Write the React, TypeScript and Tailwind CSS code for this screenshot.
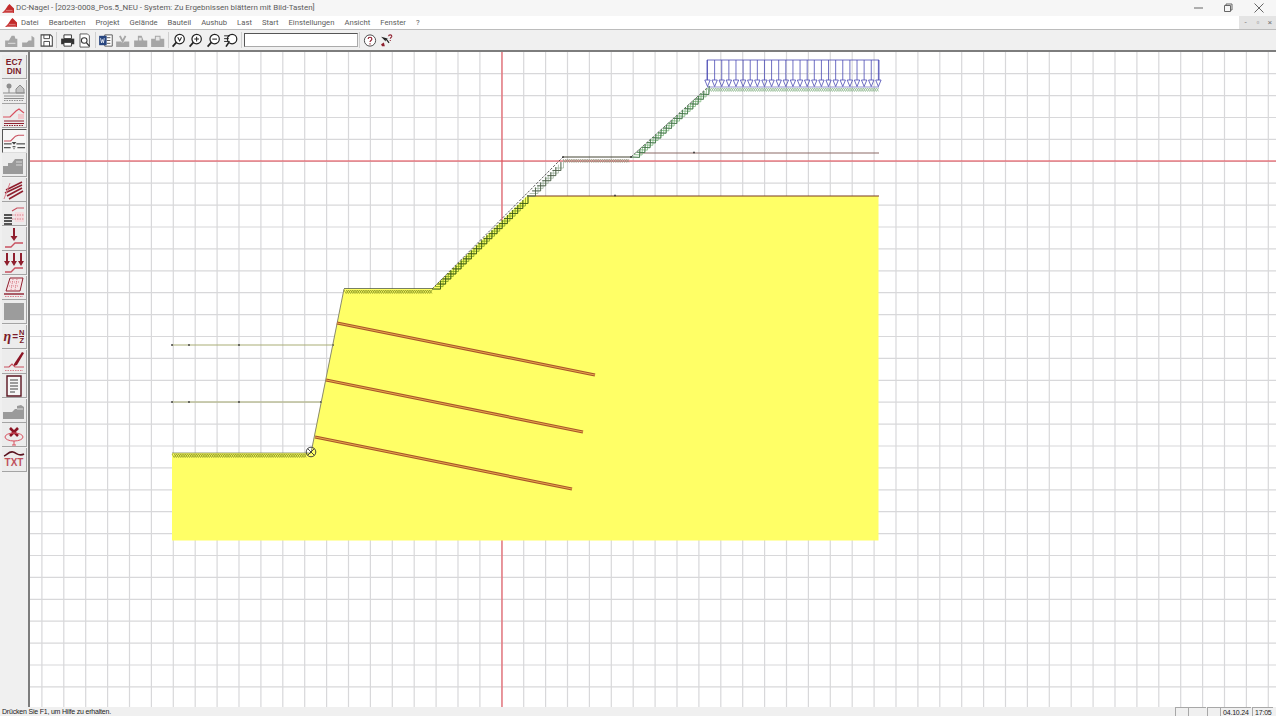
import type { ReactNode } from 'react';

type Pt = [number, number];

const UI_FONT = "font-['Roboto','Noto_Sans',sans-serif]";

// chevrons below a sloped ground segment; arms run back up to the surface
const chevrons = (a: Pt, b: Pt, depth: number, step: number, inset = 0) => {
  const dx = b[0] - a[0];
  const dy = b[1] - a[1];
  const len = Math.hypot(dx, dy);
  const ux = dx / len;
  const uy = dy / len;
  const nx = -uy;
  const ny = ux;
  const out: string[] = [];
  const d = depth - inset;
  for (let t = depth; t <= len - depth / 2; t += step) {
    const p = (along: number, off: number) =>
      `${(a[0] + ux * along + Math.abs(nx) * off).toFixed(1)},${(a[1] + uy * along + Math.abs(ny) * off).toFixed(1)}`;
    out.push(`M${p(t - d, inset)}L${p(t, depth)}L${p(t + d, inset)}`);
  }
  return out.join('');
};

const zigzag = (x1: number, x2: number, y: number, h: number, step: number, shift = 0) => {
  const pts: string[] = [];
  let i = 0;
  for (let x = x1 + shift; x <= x2; x += step / 2) {
    pts.push(`${x.toFixed(1)},${(i % 2 === 0 ? y : y + h).toFixed(1)}`);
    i++;
  }
  return pts.join(' ');
};

const range = (n: number) => Array.from({ length: n }, (_, i) => i);

const Dot = ({ x, y }: { x: number; y: number }) => <rect x={x - 0.8} y={y - 0.8} width={1.6} height={1.6} fill="#333" />;

const SlopeHatch = ({ a, b, color, dark }: { a: Pt; b: Pt; color: string; dark: string }) => (
  <g fill="none">
    <path d={chevrons(a, b, 6, 3.6)} stroke={color} strokeWidth={0.75} />
    <path d={chevrons(a, b, 6, 7.2)} stroke={dark} strokeWidth={0.75} />
  </g>
);

const FlatHatch = ({ x1, x2, y, color }: { x1: number; x2: number; y: number; color: string }) => (
  <g fill="none" stroke={color} strokeWidth={0.6}>
    <polyline points={zigzag(x1, x2, y + 1, 3.5, 4.4)} />
    <polyline points={zigzag(x1, x2, y + 1, 3.5, 4.4, 2.2)} />
  </g>
);

const Nail = ({ a, b }: { a: Pt; b: Pt }) => (
  <g>
    <line x1={a[0]} y1={a[1]} x2={b[0]} y2={b[1]} stroke="#a8552a" strokeWidth={3.2} />
    <line x1={a[0]} y1={a[1]} x2={b[0]} y2={b[1]} stroke="#e8a84a" strokeWidth={1} />
  </g>
);

const Drawing = () => {
  const gridX = range(57).map((i) => 41.9 + i * 21.9);
  const gridY = range(30).map((i) => 73.7 + i * 21.9);
  return (
    <svg className="block flex-1 h-full bg-white" viewBox="30 52 1246 655" preserveAspectRatio="none">
      {gridX.map((x) => (
        <line key={x} x1={x} y1={52} x2={x} y2={707} stroke="#d8d8da" strokeWidth={1.2} />
      ))}
      {gridY.map((y) => (
        <line key={y} x1={30} y1={y} x2={1276} y2={y} stroke="#d8d8da" strokeWidth={1.2} />
      ))}
      <line x1={502} y1={52} x2={502} y2={707} stroke="#e8454f" strokeWidth={1} />
      <line x1={30} y1={161} x2={1276} y2={161} stroke="#e8454f" strokeWidth={1} />

      <polygon
        points="172,453 311,453 314,437 344,289 432,289 527,196 878.5,196 878.5,540.5 172,540.5"
        fill="#ffff66"
      />

      <line x1={640} y1={153} x2={879} y2={153} stroke="#8c6a66" strokeWidth={1.2} />
      <Dot x={694} y={152.5} />
      <line x1={527} y1={196} x2={879} y2={196} stroke="#7a3a20" strokeWidth={1.2} />
      <Dot x={615} y={195.5} />

      <line x1={172} y1={345} x2={333} y2={345} stroke="#a9ad76" strokeWidth={1.2} />
      <line x1={172} y1={402} x2={321} y2={402} stroke="#a9ad76" strokeWidth={1.2} />
      {[172, 189, 239, 333].map((x) => (
        <Dot key={x} x={x} y={345} />
      ))}
      {[172, 189, 239, 321].map((x) => (
        <Dot key={x} x={x} y={402} />
      ))}

      <line x1={311} y1={453} x2={344} y2={289} stroke="#8a8a70" strokeWidth={1} />

      <FlatHatch x1={172} x2={308} y={453} color="#6f7f14" />
      <line x1={172} y1={453} x2={311} y2={453} stroke="#66703a" strokeWidth={0.7} />
      <FlatHatch x1={344} x2={432} y={289} color="#6f7f14" />
      <line x1={344} y1={288.5} x2={432} y2={288.5} stroke="#55603a" strokeWidth={0.8} />

      <line x1={432} y1={289} x2={563} y2={157} stroke="#333" strokeWidth={0.8} strokeDasharray="2.5 1.5" />
      <SlopeHatch a={[432, 289]} b={[527, 196]} color="#6f9a18" dark="#37501a" />
      <SlopeHatch a={[527, 196]} b={[563, 160]} color="#9ab09a" dark="#44543f" />

      <line x1={563} y1={157} x2={631} y2={157} stroke="#443" strokeWidth={1} />
      <FlatHatch x1={563} x2={631} y={158} color="#8a8a70" />

      <line x1={631} y1={157} x2={707} y2={88} stroke="#333" strokeWidth={0.8} strokeDasharray="2.5 1.5" />
      <SlopeHatch a={[631, 157]} b={[707, 88]} color="#72b072" dark="#3d6a44" />
      <FlatHatch x1={707} x2={879} y={87} color="#77a877" />
      <Dot x={563} y={157} />
      <Dot x={631} y={157} />

      <Nail a={[337, 323]} b={[595, 375]} />
      <Nail a={[326, 380]} b={[583, 432]} />
      <Nail a={[315, 437]} b={[572, 489]} />

      <g fill="none" stroke="#4a4ab4" strokeWidth={0.8}>
        <polyline points="707,80 707,60 879,60 879,80" />
        {range(25).map((i) => {
          const x = 707.5 + i * 7.12;
          return (
            <g key={x}>
              <line x1={x} y1={60} x2={x} y2={80} />
              <polygon points={`${x - 2.7},80 ${x + 2.7},80 ${x},86.5`} />
            </g>
          );
        })}
      </g>
      <line x1={707} y1={87} x2={879} y2={87} stroke="#4a4ab4" strokeWidth={0.6} />

      <g fill="none" stroke="#333" strokeWidth={0.9}>
        <circle cx={311} cy={452} r={4.8} />
        <line x1={307.6} y1={448.6} x2={314.4} y2={455.4} />
        <line x1={314.4} y1={448.6} x2={307.6} y2={455.4} />
      </g>
    </svg>
  );
};

const RED = '#8f1f2e';
const PINK = '#d9808c';
const GRAY = '#8e8e8e';

const Ico = ({ children }: { children: ReactNode }) => (
  <svg width="24" height="22" viewBox="0 0 24 22" fill="none">
    {children}
  </svg>
);

const Soil = ({ color }: { color: string }) => (
  <g stroke={color}>
    <line x1="2" y1="16" x2="22" y2="16" />
    <line x1="2" y1="18.5" x2="22" y2="18.5" />
    <line x1="2" y1="20.5" x2="22" y2="20.5" strokeDasharray="1.5 1" />
  </g>
);

const sideIcons: { key: string; active?: boolean; node: ReactNode }[] = [
  {
    key: 'din',
    node: (
      <span className="flex flex-col items-center font-['Liberation_Sans',sans-serif] font-bold text-[8.5px] leading-[8.5px] text-[#7b1c2a]">
        <span>EC7</span>
        <span>DIN</span>
      </span>
    ),
  },
  {
    key: 'terrain',
    node: (
      <Ico>
        <circle cx="7" cy="6" r="2.5" fill={GRAY} />
        <line x1="7" y1="8" x2="7" y2="13" stroke={GRAY} />
        <path d="M14 9l4-4 4 4v4h-8z" fill="#c4c4c4" stroke={GRAY} />
        <path d="M1 13h22" stroke={GRAY} />
        <Soil color={GRAY} />
      </Ico>
    ),
  },
  {
    key: 'layers',
    node: (
      <Ico>
        <path d="M1 12h7l6-6 3-2 5 4" stroke="#d8505f" strokeWidth="1.2" />
        <path d="M16 9h6v5h-6z" fill="#f3c8cc" />
        <Soil color={RED} />
      </Ico>
    ),
  },
  {
    key: 'water',
    active: true,
    node: (
      <Ico>
        <path d="M1 11h7l5-5 3-1h6" stroke="#c8505f" strokeWidth="1.2" />
        <path d="M1 14h8M14 14h9" stroke="#222" />
        <path d="M9 12h5l-2.5 3z" fill="#444" />
        <path d="M10 17h3M11 19h1" stroke="#222" />
        <path d="M1 18h7M15 18h8" stroke="#222" />
      </Ico>
    ),
  },
  {
    key: 'gray1',
    node: (
      <Ico>
        <path d="M1 20v-8h5v-3h4l3-4h8v15z" fill="#9a9a9a" />
        <path d="M14 8h6M14 11h6" stroke="#d8d8d8" />
      </Ico>
    ),
  },
  {
    key: 'nails',
    node: (
      <Ico>
        <path d="M4 12l16-8M3 15l17-8M5 18l15-8M7 21l14-8" stroke={RED} strokeWidth="1.6" />
        <path d="M2 21l6-16" stroke={PINK} />
      </Ico>
    ),
  },
  {
    key: 'anchors',
    node: (
      <Ico>
        <path d="M2 12h8M2 15h8M2 18h8M2 21h8" stroke="#222" strokeWidth="1.3" />
        <path d="M10 8l5-3h7" stroke="#c8505f" strokeWidth="1.2" />
        <path d="M13 9h9v10h-9z" fill="#f6dcdf" />
        <path d="M10 12h12M10 16h12" stroke={PINK} strokeDasharray="1.5 1" />
      </Ico>
    ),
  },
  {
    key: 'load1',
    node: (
      <Ico>
        <path d="M12 1v9" stroke={RED} strokeWidth="2" />
        <path d="M8.5 9h7L12 14z" fill={RED} />
        <path d="M3 20h6l4-4h8" stroke="#c8505f" strokeWidth="1.3" />
      </Ico>
    ),
  },
  {
    key: 'load3',
    node: (
      <Ico>
        {[5, 12, 19].map((x) => (
          <g key={x}>
            <path d={`M${x} 1v9`} stroke={RED} strokeWidth="2" />
            <path d={`M${x - 3} 9h6l-3 5z`} fill={RED} />
          </g>
        ))}
        <path d="M3 20h6l4-4h8" stroke="#c8505f" strokeWidth="1.3" />
      </Ico>
    ),
  },
  {
    key: 'slice',
    node: (
      <Ico>
        <path d="M8 2h13l-3 13H4z" fill="#f7e4e6" stroke={RED} />
        <path d="M8 6h10M7 10h10M11 3l-2 11M15 3l-2 11" stroke={PINK} strokeDasharray="1 1" />
        <path d="M2 18h20" stroke={RED} strokeWidth="1.4" />
        <path d="M3 20.5h18" stroke={PINK} strokeDasharray="1.5 1" />
      </Ico>
    ),
  },
  {
    key: 'gray2',
    node: <span className="block w-[20px] h-[17px] bg-[#9c9c9c]" />,
  },
  {
    key: 'eta',
    node: (
      <span className="flex items-center font-['Liberation_Serif',serif] italic font-bold text-[14px] text-[#7b1c2a]">
        η
        <span className="not-italic text-[10px] font-['Liberation_Sans',sans-serif] mx-[1px]">=</span>
        <span className="flex flex-col not-italic items-center text-[7.5px] leading-[7.5px] font-['Liberation_Sans',sans-serif]">
          <span className="border-b border-[#7b1c2a]">N</span>
          <span>Z</span>
        </span>
      </span>
    ),
  },
  {
    key: 'pen',
    node: (
      <Ico>
        <path d="M12 14L20 2l2 1-7 12-3 1z" fill="#8a1424" />
        <path d="M2 17h5l3-3 3 3h9" stroke="#c8505f" strokeWidth="1.2" />
        <path d="M3 20.5h18" stroke={PINK} strokeDasharray="1.5 1" />
      </Ico>
    ),
  },
  {
    key: 'doc',
    node: (
      <Ico>
        <path d="M5 1h14v20H5z" fill="#f6f6f6" stroke="#5a1420" strokeWidth="1.4" />
        <path d="M8 5h8M8 8h8M8 11h8M8 14h8M8 17h5" stroke="#444" />
      </Ico>
    ),
  },
  {
    key: 'gray3',
    node: (
      <Ico>
        <path d="M1 20v-7h9l3-3h2V7l4-1 3 2v12z" fill="#9a9a9a" />
        <path d="M15 10h6" stroke="#e0e0e0" />
      </Ico>
    ),
  },
  {
    key: 'del',
    node: (
      <Ico>
        <path d="M8 4l8 8M16 4l-8 8" stroke="#8a1424" strokeWidth="2.6" />
        <ellipse cx="12" cy="13" rx="9" ry="4" stroke="#d8505f" />
        <path d="M12 17v4M10 21h4" stroke="#d8505f" />
      </Ico>
    ),
  },
  {
    key: 'txt',
    node: (
      <span className="flex flex-col items-center">
        <svg width="22" height="8" viewBox="0 0 22 8" fill="none">
          <path d="M1 6c3-1 5-5 9-4s6 5 11 2" stroke="#5a1420" strokeWidth="1.6" />
        </svg>
        <span className="font-['Liberation_Sans',sans-serif] font-bold text-[10px] leading-[10px] text-[#c0505c]">TXT</span>
      </span>
    ),
  },
];

const SideToolbar = () => (
  <div className="w-[30px] h-full shrink-0 bg-[#f0f0f0] border-r-2 border-[#7d7d7d] pt-[3px] pl-[2px] flex flex-col gap-[0.56px]">
    {sideIcons.map((b) => (
      <div
        key={b.key}
        className={
          b.active
            ? 'w-[25px] h-[24px] flex items-center justify-center bg-[#f7f7f7] border-t border-l border-[#555] border-b border-r border-b-[#ddd] border-r-[#ddd]'
            : 'w-[25px] h-[24px] flex items-center justify-center bg-[#ececec] border-b border-r border-[#a4a4a4]'
        }
      >
        {b.node}
      </div>
    ))}
  </div>
);

const Tool = ({ children, w = 17.4 }: { children: ReactNode; w?: number }) => (
  <svg width={w} height="15" viewBox="0 0 16 16" fill="none" className="shrink-0">
    {children}
  </svg>
);

const Sep = () => <span className="w-px h-[16px] mx-[1.25px] bg-[#cfcfcf]" />;

const Mag = ({ sign }: { sign: string }) => (
  <Tool>
    <circle cx="9" cy="6.5" r="5" stroke="#222" strokeWidth="1.3" fill="#fff" />
    <path d="M5.5 10L1.5 14.5" stroke="#222" strokeWidth="1.8" />
    <path d={sign} stroke="#222" strokeWidth="1.1" />
  </Tool>
);

const TopToolbar = () => (
  <div className="h-[22px] shrink-0 bg-[#f0f0f0] border-b-2 border-[#7d7d7d] flex items-center pl-[3px]">
    <Tool>
      <path d="M1 15V8h4l3-5h3l1 3h2v9z" fill="#a6a6a6" />
      <path d="M4 11h8" stroke="#e4e4e4" />
    </Tool>
    <Tool>
      <path d="M1 15v-5h5l2-2h3V3l3 2v10z" fill="#a6a6a6" />
    </Tool>
    <Tool>
      <path d="M2 2h10l2 2v10H2z" fill="#fff" stroke="#444" strokeWidth="1.1" />
      <path d="M5 2v4h6V2M5 14V9h6v5" stroke="#444" />
    </Tool>
    <Sep />
    <Tool>
      <path d="M4 2h8v4H4z" fill="#fff" stroke="#333" />
      <path d="M1 6h14v6H1z" fill="#333" />
      <path d="M4 10h8v4H4z" fill="#fff" stroke="#333" />
    </Tool>
    <Tool>
      <path d="M3 1h8l2 2v12H3z" fill="#fff" stroke="#555" />
      <circle cx="7.5" cy="8" r="3" stroke="#333" strokeWidth="1.1" />
      <path d="M10 10.5l3 3.5" stroke="#333" strokeWidth="1.5" />
    </Tool>
    <Sep />
    <Tool>
      <path d="M7 2h8v12H7z" fill="#fff" stroke="#555" />
      <path d="M9 5h4M9 8h4M9 11h4" stroke="#555" />
      <path d="M1 3h8v10H1z" fill="#27457f" />
      <path d="M2.5 5.5l1 5 1-3.5 1 3.5 1-5" stroke="#fff" strokeWidth=".8" />
    </Tool>
    <Tool>
      <path d="M1 15V9h5l2 2 2-2h5v6z" fill="#a6a6a6" />
      <path d="M5 3l3 6 3-6" stroke="#a6a6a6" strokeWidth="2" />
    </Tool>
    <Tool>
      <path d="M1 15V8h4V3h4l2 5h4v7z" fill="#a6a6a6" />
      <path d="M6 5h3v3H6z" fill="#e0e0e0" />
    </Tool>
    <Tool>
      <path d="M1 15V6h4V3h6v3h4v9z" fill="#a6a6a6" />
      <path d="M6 4h4v4H6z" fill="#e6e6e6" />
    </Tool>
    <Sep />
    <Mag sign="M7 4.5l2 4 2-4" />
    <Mag sign="M6.5 6.5h5M9 4v5" />
    <Mag sign="M6.5 6.5h5" />
    <Tool>
      <circle cx="9.5" cy="6.5" r="5" stroke="#222" strokeWidth="1.3" fill="#fff" />
      <path d="M6 10l-3 4.5" stroke="#222" strokeWidth="1.8" />
      <path d="M1 3h6M1 6h5M1 9h6" stroke="#222" />
    </Tool>
    <Sep />
    <div className="w-[114px] h-[14px] ml-[1px] bg-white border border-[#555] border-r-[#aaa] border-b-[#aaa] shrink-0" />
    <Sep />
    <Tool w={16}>
      <circle cx="8" cy="8" r="6" fill="#fff" stroke="#444" />
      <path d="M6 6.5c0-2.6 4-2.6 4 0 0 1.5-2 1.5-2 3M8 11v1.3" stroke="#8f1f2e" strokeWidth="1.2" />
    </Tool>
    <Tool>
      <path d="M2 4l5 5v-2l3 4 1-1-3-4h2z" fill="#222" />
      <path d="M2 12l3-2 1 4H3z" fill="#8f1f2e" />
      <path d="M10 3.5c0-2 3.5-2 3.5 0 0 1.3-1.7 1.3-1.7 2.5M11.8 7.5v1" stroke="#8f1f2e" strokeWidth="1.1" />
    </Tool>
  </div>
);

const menus = ['Datei', 'Bearbeiten', 'Projekt', 'Gelände', 'Bauteil', 'Aushub', 'Last', 'Start', 'Einstellungen', 'Ansicht', 'Fenster', '?'];

const Logo = ({ size = 12 }: { size?: number }) => (
  <svg width={size} height={size * 0.75} viewBox="0 0 16 12" className="shrink-0">
    <path d="M0 12l4-4 4-6 2-2 6 6v6z" fill="#c22a2a" />
    <path d="M2 11h13M5 8.5h9" stroke="#f2b8b8" strokeWidth=".8" />
  </svg>
);

export default function App() {
  return (
    <div className={`w-[1276px] h-[716px] overflow-hidden flex flex-col bg-[#f0f0f0] text-[#555] ${UI_FONT}`}>
      <div className="h-[16px] shrink-0 flex items-center bg-[#f6f6f6] pl-[2px]">
        <Logo />
        <span className="ml-[2px] text-[7.95px] leading-none whitespace-nowrap text-[#5c5c5c]">
          DC-Nagel - [2023-0008_Pos.5_NEU - System: Zu Ergebnissen blättern mit Bild-Tasten]
        </span>
        <div className="ml-auto flex items-center text-[#555]">
          <svg width="10" height="10" viewBox="0 0 10 10" className="mr-[19px]" fill="none">
            <path d="M0 5h9" stroke="#666" />
          </svg>
          <svg width="10" height="10" viewBox="0 0 10 10" className="mr-[21px]" fill="none">
            <path d="M1.5 2.5h6v6h-6zM3 2.5V1h6v6H7.5" stroke="#666" />
          </svg>
          <svg width="10" height="10" viewBox="0 0 10 10" className="mr-[12px]" fill="none">
            <path d="M.5.5l9 9M9.5.5l-9 9" stroke="#666" />
          </svg>
        </div>
      </div>
      <div className="h-[14px] shrink-0 flex items-center bg-white border-b border-[#bcbcbc] pl-[5px]">
        <Logo />
        <div className="ml-[4px] flex gap-[10px] text-[7.7px] leading-none whitespace-nowrap text-[#5c5c5c]">
          {menus.map((m) => (
            <span key={m}>{m}</span>
          ))}
        </div>
        <div className="ml-auto flex h-full items-stretch text-[8px] text-[#777] bg-[#e4e4e4]">
          <span className="w-[13px] flex items-center justify-center">-</span>
          <span className="w-[12px] flex items-center justify-center">▫</span>
          <span className="w-[12px] flex items-center justify-center">×</span>
        </div>
      </div>
      <TopToolbar />
      <div className="flex-1 min-h-0 flex">
        <SideToolbar />
        <Drawing />
      </div>
      <div className="h-[9px] shrink-0 flex items-start bg-[#f0f0f0] overflow-hidden font-['Liberation_Sans',sans-serif] text-[7px] tracking-[-0.2px] leading-[10px] text-[#222]">
        <span className="pl-[2px]">Drücken Sie F1, um Hilfe zu erhalten.</span>
        <div className="ml-auto flex h-full mr-[3px]">
          <span className="w-[13px] border-l border-t border-[#a8a8a8]" />
          <span className="w-[18px] border-l border-t border-[#a8a8a8]" />
          <span className="w-[13px] border-l border-t border-[#a8a8a8] ml-[1px]" />
          <span className="w-[31px] pl-[2px] border-l border-t border-[#a8a8a8]">04.10.24</span>
          <span className="w-[21px] pl-[2px] border-l border-t border-[#a8a8a8] ml-[1px]">17:05</span>
        </div>
      </div>
    </div>
  );
}
